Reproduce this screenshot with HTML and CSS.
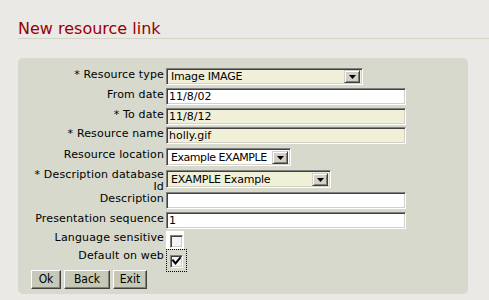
FILE: index.html
```html
<!DOCTYPE html>
<html>
<head>
<meta charset="utf-8">
<link rel="stylesheet" href="styles.css">
</head>
<body>
<div class="page">
  <h1 class="title">New resource link</h1>
  <div class="panel">
    <div class="form">
      <div class="lbl">* Resource type</div>
      <div class="ctl"><div class="select req w197"><span class="val">Image IMAGE</span><span class="arrow"><svg width="7" height="4" viewBox="0 0 7 4"><path d="M0 0H7L3.5 4Z" fill="#000"/></svg></span></div></div>

      <div class="lbl">From date</div>
      <div class="ctl"><div class="input">11/8/02</div></div>

      <div class="lbl">* To date</div>
      <div class="ctl"><div class="input req">11/8/12</div></div>

      <div class="lbl">* Resource name</div>
      <div class="ctl"><div class="input req">holly.gif</div></div>

      <div class="lbl">Resource location</div>
      <div class="ctl"><div class="select w125 tall"><span class="val tight">Example EXAMPLE</span><span class="arrow"><svg width="7" height="4" viewBox="0 0 7 4"><path d="M0 0H7L3.5 4Z" fill="#000"/></svg></span></div></div>

      <div class="lbl wrap">* Description database Id</div>
      <div class="ctl"><div class="select req w165 tall"><span class="val">EXAMPLE Example</span><span class="arrow"><svg width="7" height="4" viewBox="0 0 7 4"><path d="M0 0H7L3.5 4Z" fill="#000"/></svg></span></div></div>

      <div class="lbl">Description</div>
      <div class="ctl"><div class="input"></div></div>

      <div class="lbl">Presentation sequence</div>
      <div class="ctl"><div class="input">1</div></div>

      <div class="lbl">Language sensitive</div>
      <div class="ctl"><div class="cbwrap white"><span class="cb"></span></div></div>

      <div class="lbl">Default on web</div>
      <div class="ctl"><div class="cbwrap focus"><span class="cb"><svg width="9" height="9" viewBox="0 0 9 9"><path d="M1 3.5L3.5 6.5L8 1" fill="none" stroke="#000" stroke-width="2" stroke-linecap="square"/></svg></span></div></div>

      <div class="buttons">
        <button class="btn b-ok">Ok</button>
        <button class="btn b-back">Back</button>
        <button class="btn b-exit">Exit</button>
      </div>
    </div>
  </div>
</div>
</body>
</html>
```
FILE: styles.css
```css
html, body {
  margin: 0;
  padding: 0;
  background: #ebe9e6;
}
.page {
  padding: 20px 0 0 18px;
  font-family: "DejaVu Sans", Verdana, sans-serif;
}
.title {
  margin: 0;
  font-size: 16px;
  font-weight: normal;
  line-height: 18px;
  color: #990000;
  border-bottom: 1px solid #d2d4c4;
  padding-left: 0;
}
.panel {
  margin-top: 19px;
  width: 450px;
  height: 236px;
  background: #d6d9cb;
  border-radius: 5px;
  box-sizing: border-box;
  padding: 10px 0 0 10px;
}
.form {
  display: grid;
  grid-template-columns: 136px 1fr;
  column-gap: 2px;
  grid-template-rows: 20px 20px 19px 21px 22px 22px 20px 19px 18px 21px 20px;
}
.lbl {
  font-size: 11px;
  line-height: 14px;
  text-align: right;
  color: #000;
  letter-spacing: 0.15px;
  white-space: nowrap;
}
.lbl.wrap {
  white-space: normal;
  line-height: 12px;
  margin-top: -1px;
  margin-left: -4px;
}
.ctl {
  display: flex;
  align-items: flex-start;
}
.input, .select {
  box-sizing: border-box;
  height: 17px;
  border: 1px solid;
  border-color: #808080 #ffffff #ffffff #808080;
  box-shadow: inset 1px 1px #404040, inset -1px -1px #d4d0c8;
  background: #ffffff;
  font-size: 11px;
  line-height: 14px;
  padding: 1px 0 0 2px;
  color: #000;
}
.input {
  width: 240px;
}
.req {
  background: #f0efd8;
}
.select {
  display: flex;
  align-items: stretch;
  padding: 1px 2px 2px 4px;
  line-height: 14px;
}
.select.tall {
  height: 18px;
  padding-top: 2px;
}
.w197 { width: 197px; }
.w125 { width: 125px; }
.w165 { width: 165px; }
.val {
  flex: 1;
  white-space: nowrap;
  overflow: hidden;
  letter-spacing: -0.2px;
}
.val.tight {
  letter-spacing: -0.45px;
}
.arrow {
  width: 16px;
  height: 13px;
  box-sizing: border-box;
  background: #d4d0c8;
  border: 1px solid;
  border-color: #d4d0c8 #404040 #404040 #d4d0c8;
  box-shadow: inset 1px 1px #ffffff, inset -1px -1px #808080;
  display: flex;
  align-items: center;
  justify-content: center;
}
.arrow svg {
  display: block;
  margin-top: 1px;
}
.cbwrap {
  box-sizing: border-box;
}
.cbwrap.white {
  background: #ffffff;
  height: 18px;
  width: 18px;
  padding: 4px 0 0 4px;
}
.cbwrap.focus {
  height: 23px;
  width: 21px;
  border: 1px dotted #000;
  padding: 5px 3px;
}
.cb {
  display: flex;
  align-items: center;
  justify-content: center;
  box-sizing: border-box;
  width: 13px;
  height: 13px;
  border: 1px solid;
  border-color: #808080 #ffffff #ffffff #808080;
  box-shadow: inset 1px 1px #404040, inset -1px -1px #d4d0c8;
  background: #f4f4f4;
}
.cb svg {
  display: block;
}
.buttons {
  grid-column: 1 / 3;
  display: flex;
  gap: 3px;
  padding-left: 3px;
}
.btn {
  box-sizing: border-box;
  height: 19px;
  margin: 0;
  padding: 0;
  font-family: "DejaVu Sans Condensed", "DejaVu Sans", sans-serif;
  font-stretch: condensed;
  font-size: 12px;
  line-height: 15px;
  color: #000;
  background: #c6c9b7;
  border: 1px solid;
  border-color: #ffffff #404040 #404040 #ffffff;
  box-shadow: inset -1px -1px #808080;
  border-radius: 0;
}
.b-ok { width: 30px; }
.b-back { width: 46px; }
.b-exit { width: 34px; }
```
